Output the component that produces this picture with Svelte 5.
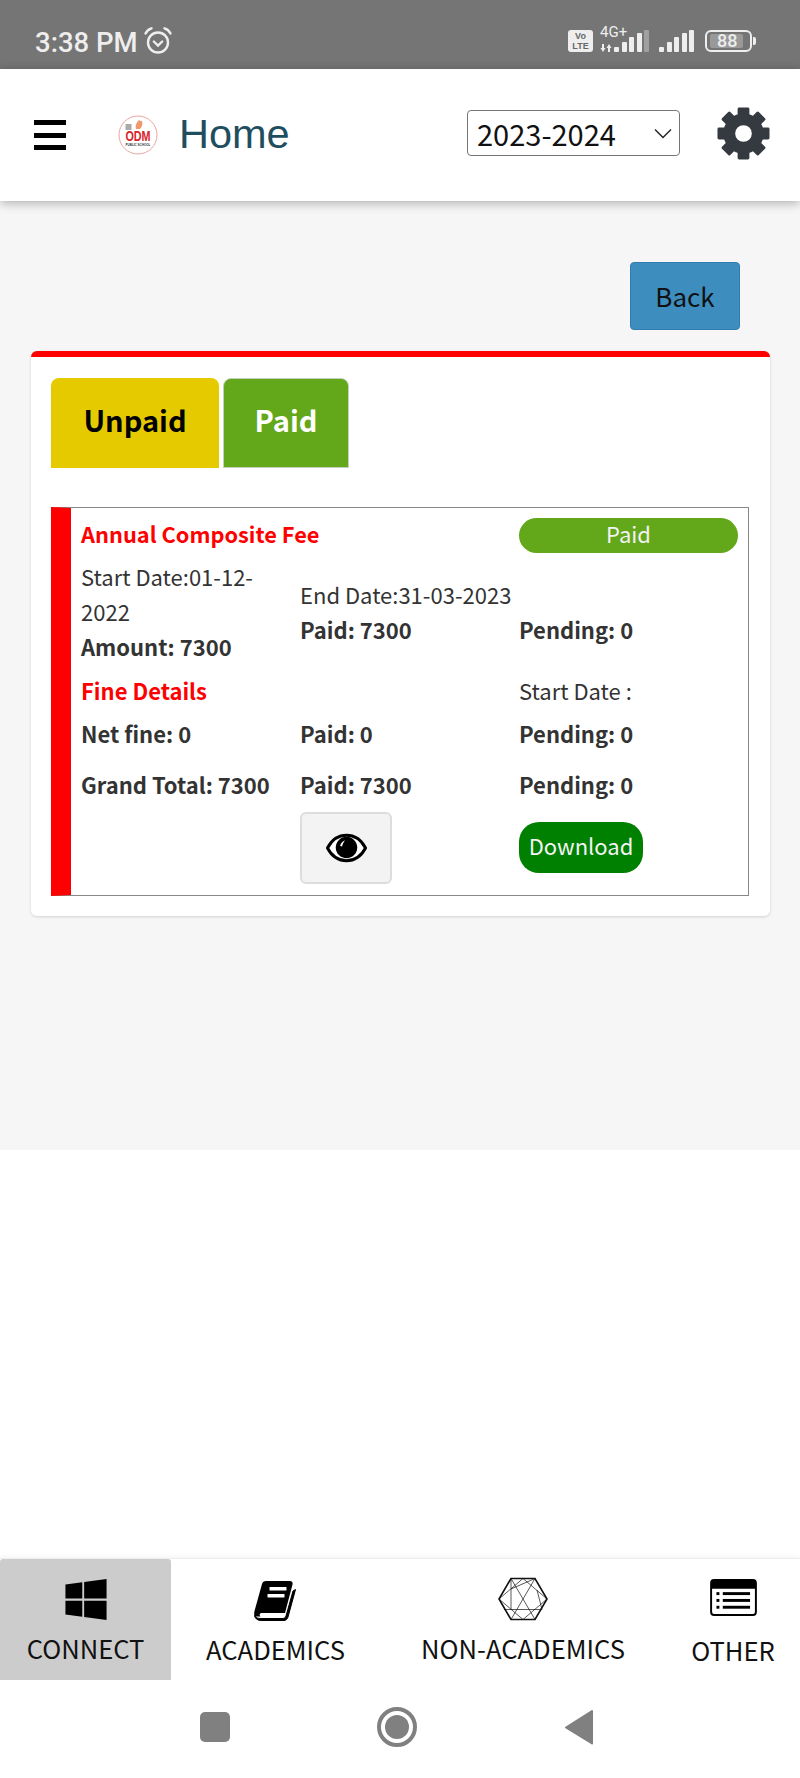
<script>
  const rows = [
    { a: 'Net fine: 0', b: 'Paid: 0', c: 'Pending: 0', cls: 'r-net' },
    { a: 'Grand Total: 7300', b: 'Paid: 7300', c: 'Pending: 0', cls: 'r-grand' }
  ];
  const teeth = [0, 45, 90, 135, 180, 225, 270, 315];
</script>

<div class="page">
  <div class="status">
    <span class="time">3:38 PM</span>
    <svg class="alarm" viewBox="0 0 30 30" width="30" height="30" fill="none" stroke="#eee" stroke-width="2.4">
      <circle cx="15" cy="16.5" r="10"/>
      <path d="M10.8 15.5 15 19.5 19.2 15.500" stroke-linecap="round"/>
      <path d="M2.5 7.5C3.8 4.8 6 3 8.5 2.3M27.5 7.5C26.2 4.8 24 3 21.5 2.3" stroke-linecap="round"/>
    </svg>
    <div class="status-right">
      <div class="volte"><span>Vo</span><span>LTE</span></div>
      <div class="net">
        <span class="fourg">4G+</span>
        <svg class="arrows" width="12" height="8" viewBox="0 0 12 8" fill="#eee">
          <path d="M2 0h2v4h1.500L3 8 .5 4H2ZM8 8h2V4h1.500L9 0 6.500 4H8Z"/>
        </svg>
        <div class="sig s1">
          <i style="height:5px"></i><i style="height:10px"></i><i style="height:15px"></i><i style="height:19px"></i><i class="dim" style="height:22px"></i>
        </div>
      </div>
      <div class="sig s2">
        <i style="height:5px"></i><i style="height:10px"></i><i style="height:15px"></i><i style="height:19px"></i><i style="height:22px"></i>
      </div>
      <div class="batt"><div class="batt-in"><div class="batt-fill"></div><span>88</span></div></div>
      <div class="batt-tip"></div>
    </div>
  </div>

  <header class="top">
    <div class="burger"><i></i><i></i><i></i></div>
    <div class="logo">
      <svg viewBox="0 0 40 40" width="40" height="40">
        <circle cx="20" cy="20" r="19" fill="#fff" stroke="#e8a69e" stroke-width="1"/>
        <rect x="7.500" y="9" width="6" height="6" fill="#aaa"/>
        <path d="M18 14c-1-3 0-6 3-9 1 1 2 1 3 1 1 3 0 6-2 8Z" fill="#ee9a6c"/>
        <text transform="translate(20 26) scale(.72 1)" text-anchor="middle" class="odm">ODM</text>
        <text transform="translate(20 31) scale(.72 1)" text-anchor="middle" class="pub">PUBLIC SCHOOL</text>
      </svg>
    </div>
    <span class="home">Home</span>
    <div class="sel-wrap">
      <select class="sel"><option>2023-2024</option></select>
      <svg class="chev" viewBox="0 0 18 11" width="18" height="11" fill="none" stroke="#222" stroke-width="1.4"><path d="M1 1.500 9 9.500 17 1.500"/></svg>
    </div>
    <svg class="gear" viewBox="-27 -27 54 54" width="53" height="53">
      {#each teeth as t}
        <rect x="-6" y="-26.500" width="12" height="12" rx="1.500" fill="#343a40" transform="rotate({t})"/>
      {/each}
      <circle r="14.500" fill="none" stroke="#343a40" stroke-width="12"/>
    </svg>
  </header>

  <main class="main">
    <div class="back-row"><button class="back">Back</button></div>
    <section class="card">
      <div class="tabs">
        <button class="tab unpaid">Unpaid</button>
        <button class="tab paid">Paid</button>
      </div>
      <div class="fee">
        <div class="row r-title">
          <div class="red b title">Annual Composite Fee</div>
          <div></div>
          <div class="pill">Paid</div>
        </div>
        <div class="row r-dates">
          <div>
            <div>Start Date:01-12-2022</div>
            <div class="b">Amount: 7300</div>
          </div>
          <div class="pushed">
            <div>End Date:31-03-2023</div>
            <div class="b">Paid: 7300</div>
          </div>
          <div class="pushed-c b">Pending: 0</div>
        </div>
        <div class="row r-fine">
          <div class="red b">Fine Details</div>
          <div></div>
          <div>Start Date :</div>
        </div>
        {#each rows as r}
          <div class="row b {r.cls}">
            <div>{r.a}</div><div>{r.b}</div><div>{r.c}</div>
          </div>
        {/each}
        <div class="row r-act">
          <div></div>
          <div>
            <button class="eye" aria-label="View">
              <svg viewBox="0 0 42 30" width="41" height="30">
                <path d="M1.500 15C6 6.500 13 2 21 2s15 4.500 19.500 13C36 23.500 29 28 21 28S6 23.500 1.500 15Z" fill="#fff" stroke="#000" stroke-width="3"/>
                <circle cx="21" cy="14.500" r="11" fill="#000"/>
                <path d="M14.500 13c.5-3 2.500-5 5-6-1.500 2-2.500 4-3 6.500Z" fill="#fff"/>
              </svg>
            </button>
          </div>
          <div><button class="dl">Download</button></div>
        </div>
      </div>
    </section>
  </main>

  <div class="blank"></div>

  <nav class="nav">
    <div class="item connect">
      <svg viewBox="0 0 448 512" width="42" height="47" fill="#000"><path d="M0 93.700l183.600-25.300v177.400H0V93.700zm0 324.600l183.600 25.300V268.400H0v149.900zm203.800 28L448 480V268.400H203.800v177.900zm0-380.600v180.100H448V32L203.800 65.700z"/></svg>
      <span>CONNECT</span>
    </div>
    <div class="item academics">
      <svg viewBox="0 0 44 42" width="44" height="42">
        <path d="M12 1h24c2 0 3 1.500 2.500 3.500L31 33H8c-2.500 0-3 2-1.500 3.500H1C0 35 0 33 .5 31L8 4c.5-2 2-3 4-3Z" fill="#000"/>
        <path d="M41.500 9.500 34 37c-.5 2-2 3.500-4 3.500H7c-3.500 0-6-2-6.500-5C2 38 4 38.500 7 38.500h22c1.500 0 2.500-1 3-2.500l7-25Z" fill="#000" stroke="#000" stroke-width="1"/>
        <rect x="15.500" y="7" width="17" height="3.500" fill="#fff" rx=".5"/>
        <rect x="13.500" y="14" width="17" height="3.500" fill="#fff" rx=".5"/>
      </svg>
      <span>ACADEMICS</span>
    </div>
    <div class="item nonacad">
      <svg viewBox="0 0 50 44" width="50" height="44" fill="none" stroke="#111">
        <path d="M13 1.500h24L49 22 37 42.500H13L1 22Z" stroke-width="1.600"/>
        <path d="M13 1.500 37 42.500M37 1.500 13 42.500M1 22 25 1.500 49 22 25 42.500ZM6 32.500H44M13 1.500V32.500M44 32.500 39 13M13 12 37 1.500" stroke-width=".7"/>
      </svg>
      <span>NON-ACADEMICS</span>
    </div>
    <div class="item other">
      <svg viewBox="0 0 48 38" width="47" height="37">
        <rect x="1" y="1" width="46" height="36" rx="3" fill="#fff" stroke="#000" stroke-width="2"/>
        <path d="M3 1h42a2 2 0 0 1 2 2v7H1V3a2 2 0 0 1 2-2Z" fill="#000"/>
        <g fill="#000">
          <rect x="6.500" y="13.500" width="3" height="3"/><rect x="6.500" y="20.500" width="3" height="3"/><rect x="6.500" y="27.500" width="3" height="3"/>
          <rect x="13" y="13.500" width="28" height="3"/><rect x="13" y="20.500" width="28" height="3"/><rect x="13" y="27.500" width="28" height="3"/>
        </g>
      </svg>
      <span>OTHER</span>
    </div>
  </nav>

  <div class="android">
    <div class="sq"></div>
    <div class="ring"><div></div></div>
    <svg width="30" height="36" viewBox="0 0 30 36"><path d="M28 2 2 18.500 28 34.500Z" fill="#808080" stroke="#808080" stroke-width="2" stroke-linejoin="round"/></svg>
  </div>
</div>

<style>
  :global(body) { margin: 0; background: #fff; }
  .page {
    width: 800px; height: 1778px; display: flex; flex-direction: column;
    font-family: "Noto Sans CJK SC", "Noto Sans", sans-serif; color: #333; overflow: hidden;
  }
  button { font-family: inherit; cursor: pointer; }

  .status {
    height: 69px; flex: none; background: #757575; display: flex; align-items: center;
    padding: 16px 44px 0 35px; box-sizing: border-box; color: #eee;
  }
  .time { font-family: Roboto, sans-serif; font-size: 27.5px; font-weight: 500; }
  .alarm { margin-left: 5px; margin-top: -4px; }
  .status-right { margin-left: auto; display: flex; align-items: flex-end; height: 24px; margin-top: -3px; }
  .volte {
    width: 25px; height: 22px; margin-bottom: 1px; background: #eee; border-radius: 3px; color: #666; font-family: "Liberation Sans", sans-serif;
    font-size: 9px; font-weight: 700; display: flex; flex-direction: column; align-items: center; line-height: 10px;
    justify-content: center;
  }
  .net { position: relative; width: 49px; height: 24px; margin-left: 7px; }
  .fourg { position: absolute; left: 0; top: -6px; font: 15px/18px Roboto, sans-serif; color: #eee; }
  .arrows { position: absolute; left: 0; bottom: 1px; }
  .sig { display: flex; align-items: flex-end; gap: 2.5px; height: 22px; }
  .sig i { display: block; width: 5px; background: #eee; border-radius: 1px; }
  .sig i.dim { background: #a0a0a0; }
  .s1 { position: absolute; right: 0; bottom: 1px; }
  .s2 { margin-left: 10px; margin-bottom: 1px; }
  .batt {
    margin-left: 11px; margin-bottom: 1px; width: 47px; height: 22px; border: 2px solid #eee; border-radius: 6px; box-sizing: border-box;
    padding: 2px 3px;
  }
  .batt-in { position: relative; height: 100%; border-radius: 2px; }
  .batt-fill { position: absolute; inset: 0 4px 0 0; background: #999; border-radius: 2px; }
  .batt-in span { position: absolute; left: 7px; top: -1px; font: 500 18px/16px Roboto, sans-serif; color: #eee; }
  .batt-tip { width: 3px; height: 8px; background: #eee; border-radius: 0 2px 2px 0; margin: 0 0 8px 1px; }

  .top {
    height: 132px; flex: none; background: #fff; box-shadow: 0 2px 10px rgba(0,0,0,.3); position: relative; z-index: 2;
    display: flex; align-items: center; box-sizing: border-box; padding: 0 30px 0 34px;
  }
  .burger { width: 32px; display: flex; flex-direction: column; gap: 7.500px; }
  .burger i { display: block; height: 5px; background: #000; }
  .logo { margin-left: 52px; height: 40px; }
  .odm { font: 700 15px "Liberation Sans", sans-serif; fill: #d8232a; }
  .pub { font: 700 4.200px "Liberation Sans", sans-serif; fill: #333; }
  .home { margin-left: 21px; margin-top: -3px; font: 41.500px "Liberation Sans", sans-serif; color: #1f4e5f; }
  .sel-wrap { margin-left: auto; position: relative; width: 213px; height: 46px; margin-right: 37px; margin-top: -4px; }
  .sel {
    width: 100%; height: 100%; appearance: none; background: #fff; border: 1px solid #767676; border-radius: 4px;
    font: 29px "Noto Sans CJK SC", sans-serif; color: #111; padding: 0 0 0 9px; box-sizing: border-box;
  }
  .chev { position: absolute; right: 8px; top: 18px; pointer-events: none; }
  .gear { flex: none; margin-top: -3px; }

  .main { height: 949px; flex: none; background: #f6f6f6; box-sizing: border-box; padding: 0 30px 0 31px; }
  .back-row { display: flex; justify-content: flex-end; padding: 61px 30px 21px 0; }
  .back {
    width: 110px; height: 68px; background: #3d8dbf; border: 1px solid #2f7dad; border-radius: 4px; font-size: 26px; color: #111; padding: 0 0 2px;
  }
  .card {
    background: #fff; border-top: 6px solid #f00; border-radius: 6px; box-shadow: 0 1px 3px rgba(0,0,0,.15);
    padding: 21px 21px 20px 20px; box-sizing: border-box; height: 565px;
  }
  .tabs { display: flex; gap: 4px; align-items: flex-end; height: 90px; }
  .tab { border: none; border-radius: 8px 8px 0 0; font-size: 29px; font-weight: 700; padding: 0 0 9px; height: 90px; }
  .unpaid { width: 168px; background: #e5ca00; color: #000; }
  .paid { width: 126px; background: #62a81a; color: #fff; border: 1px solid #c6cfbc; }

  .fee {
    margin-top: 39px; height: 389px; border: 1px solid #888; border-left: 20px solid #f00; box-sizing: border-box;
    padding: 10px 10px 0 10px; font-size: 22px; line-height: 35px;
  }
  .row { display: grid; grid-template-columns: 219px 219px 219px; }
  .b { font-weight: 700; }
  .red { color: #f00; }
  .r-title { height: 35px; }
  .title { white-space: nowrap; line-height: 31px; font-size: 21.800px; }
  .pill {
    height: 35px; background: #62a81a; color: #f2f2f2; border-radius: 18px; text-align: center; font-size: 22px; line-height: 30px;
  }
  .r-dates { margin-top: 6px; }
  .r-dates > div:first-child { padding-right: 30px; }
  .pushed { padding-top: 18px; }
  .pushed-c { padding-top: 53px; }
  .r-fine { margin-top: 9px; }
  .r-net { margin-top: 8px; }
  .r-grand { margin-top: 16px; }
  .r-act { margin-top: 10px; }
  .eye {
    width: 92px; height: 72px; background: #f3f3f3; border: 2px solid #ddd; border-radius: 6px; padding: 0; display: flex;
    align-items: center; justify-content: center;
  }
  .dl {
    margin-top: 10px; width: 124px; height: 51px; background: #008000; color: #f4f4f4; border: none; border-radius: 20px; font-size: 22px; padding: 0 0 5px;
    display: block;
  }

  .blank { flex: 1; }

  .nav {
    height: 122px; flex: none; background: #fff; border-top: 1px solid #eee; box-shadow: 0 -2px 4px rgba(0,0,0,.04); display: flex; box-sizing: border-box;
    color: #111; font-size: 25.600px; position: relative;
  }
  .item { display: flex; flex-direction: column; align-items: center; white-space: nowrap; line-height: 34px; box-sizing: border-box; }
  .connect { width: 171px; background: #ccc; border-radius: 3px 3px 0 0; padding-top: 17px; }
  .connect span { margin-top: 7.500px; }
  .academics { width: 209px; padding-top: 21px; }
  .academics span { margin-top: 10px; }
  .nonacad { width: 286px; padding-top: 18px; }
  .nonacad span { margin-top: 10px; }
  .other { width: 134px; padding-top: 20px; }
  .other span { margin-top: 17px; }

  .android {
    height: 98px; flex: none; background: #fff; display: flex; align-items: center; box-sizing: border-box;
    padding: 0 0 4px 200px;
  }
  .sq { width: 30px; height: 30px; border-radius: 5px; background: #808080; }
  .ring {
    width: 40px; height: 40px; border: 4px solid #808080; border-radius: 50%; margin-left: 147px; box-sizing: border-box;
    display: flex; align-items: center; justify-content: center;
  }
  .ring div { width: 24px; height: 24px; background: #808080; border-radius: 50%; }
  .android svg { margin-left: 147px; }
</style>
